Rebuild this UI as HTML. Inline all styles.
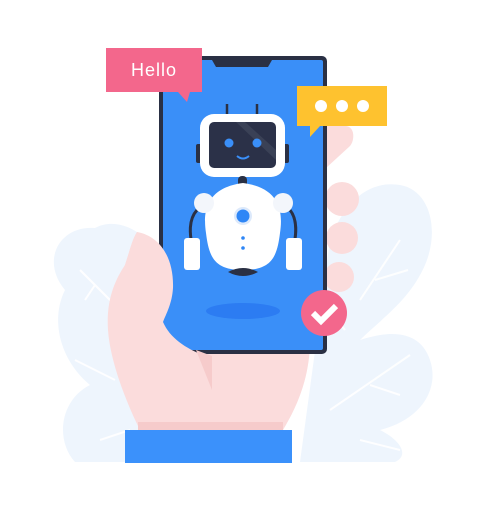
<!DOCTYPE html>
<html><head><style>html,body{margin:0;padding:0;background:#fff;width:485px;height:514px;overflow:hidden}</style></head>
<body>
<svg width="485" height="514" viewBox="0 0 485 514" xmlns="http://www.w3.org/2000/svg">
<g fill="#eef5fd">
<path d="M75 462 C55 440 60 400 90 385 C60 360 50 320 65 290 C40 260 60 225 95 228 C120 215 150 235 160 260 L200 462 Z"/>
<path d="M300 462 L330 240 C345 200 370 180 400 185 C430 190 440 230 425 265 C410 300 380 320 360 340 C390 330 420 330 430 360 C440 390 420 420 380 430 C400 440 410 455 395 462 Z"/>
</g>
<g stroke="#ffffff" stroke-width="2" fill="none" opacity="0.9">
<path d="M360 300 L400 240 M375 280 L408 270 M345 330 L320 300"/>
<path d="M330 410 L410 355 M370 385 L400 395 M360 440 L400 450"/>
<path d="M80 270 L120 310 M95 285 L85 300 M75 360 L115 380 M100 440 L130 430"/>
</g>
<path d="M137 232 C150 236 160 245 165 255 L165 340 L310 340 C310 380 295 410 283 430 L140 430 C125 400 110 360 108 330 C106 300 115 280 125 265 C130 250 132 240 137 232 Z" fill="#fbdcdc"/>
<rect x="138" y="422" width="145" height="9" fill="#f6cbcb"/>
<g fill="#fbdcdc">
<path d="M322 126 L345 126 C355 126 355 140 350 146 L326 168 Z"/>
<circle cx="342" cy="199" r="17"/>
<circle cx="342" cy="238" r="16"/>
<circle cx="339" cy="277" r="15"/>
</g>
<rect x="159" y="56" width="168" height="298" rx="5" fill="#2a3044"/>
<rect x="163" y="60" width="160" height="290" rx="2" fill="#3a8ff8"/>
<path d="M212 60 L272 60 L268 67 L216 67 Z" fill="#2a3044"/>
<!-- thumb over phone -->
<path d="M137 232 C160 236 174 258 173 288 C172 304 166 314 163 322 C170 338 185 348 205 356 L140 356 C125 330 115 300 125 265 C130 250 132 240 137 232 Z" fill="#fbdcdc"/>
<path d="M196 350 L212 356 L212 390 Z" fill="#f6cbcb"/>
<path d="M106 48 H202 V92 H190 L187 102 L178 92 H106 Z" fill="#f3678c"/>
<text x="154" y="76" font-family="Liberation Sans, sans-serif" font-size="18" fill="#fff" text-anchor="middle" letter-spacing="1">Hello</text>
<path d="M297 86 H387 V126 H320 L310 137 L310 126 H297 Z" fill="#fec22f"/>
<g fill="#fff"><circle cx="321" cy="106" r="6"/><circle cx="342" cy="106" r="6"/><circle cx="363" cy="106" r="6"/></g>
<g>
<line x1="227" y1="104" x2="227" y2="116" stroke="#2a3044" stroke-width="2.5"/>
<line x1="257" y1="104" x2="257" y2="116" stroke="#2a3044" stroke-width="2.5"/>
<rect x="196" y="144" width="8" height="19" rx="2" fill="#2a3044"/>
<rect x="281" y="144" width="8" height="19" rx="2" fill="#2a3044"/>
<rect x="200" y="114" width="85" height="63" rx="14" fill="#fff"/>
<rect x="209" y="122" width="67" height="46" rx="5" fill="#2b3148"/>
<path d="M245 122 L276 150 L276 160 L236 122 Z" fill="#3a4156"/>
<circle cx="229" cy="143" r="4.5" fill="#3a8ff8"/>
<circle cx="257" cy="143" r="4.5" fill="#3a8ff8"/>
<path d="M237 156 Q243 161 249 156" stroke="#3a8ff8" stroke-width="2" fill="none"/>
<rect x="238" y="176" width="9" height="17" rx="4" fill="#2a3044"/>
<path d="M197 210 C188 220 190 235 192 245" stroke="#2a3044" stroke-width="3" fill="none"/>
<path d="M290 210 C298 220 296 235 294 245" stroke="#2a3044" stroke-width="3" fill="none"/>
<rect x="184" y="238" width="16" height="32" rx="3" fill="#fff"/>
<rect x="286" y="238" width="16" height="32" rx="3" fill="#fff"/>
<path d="M243 270 C215 270 209 258 206 233 C203 213 205 188 243 183 C281 188 283 213 280 233 C277 258 271 270 243 270 Z" fill="#fff"/>
<path d="M228 272 Q243 264 258 272 Q243 280 228 272 Z" fill="#2a3044"/>
<circle cx="204" cy="203" r="10" fill="#f3f6fb"/>
<circle cx="283" cy="203" r="10" fill="#f3f6fb"/>
<circle cx="243" cy="216" r="9" fill="#dce9fb"/>
<circle cx="243" cy="216" r="6.5" fill="#2e86f6"/>
<circle cx="243" cy="238" r="1.8" fill="#2e86f6"/>
<circle cx="243" cy="248" r="1.8" fill="#2e86f6"/>
</g>
<ellipse cx="243" cy="311" rx="37" ry="8" fill="#2c7cf2"/>
<circle cx="324" cy="313" r="23" fill="#f3678c"/>
<path d="M313 313 L321 321 L336 306" stroke="#fff" stroke-width="6" fill="none"/>
<rect x="125" y="430" width="167" height="33" fill="#3b91fb"/>
</svg>
</body></html>
